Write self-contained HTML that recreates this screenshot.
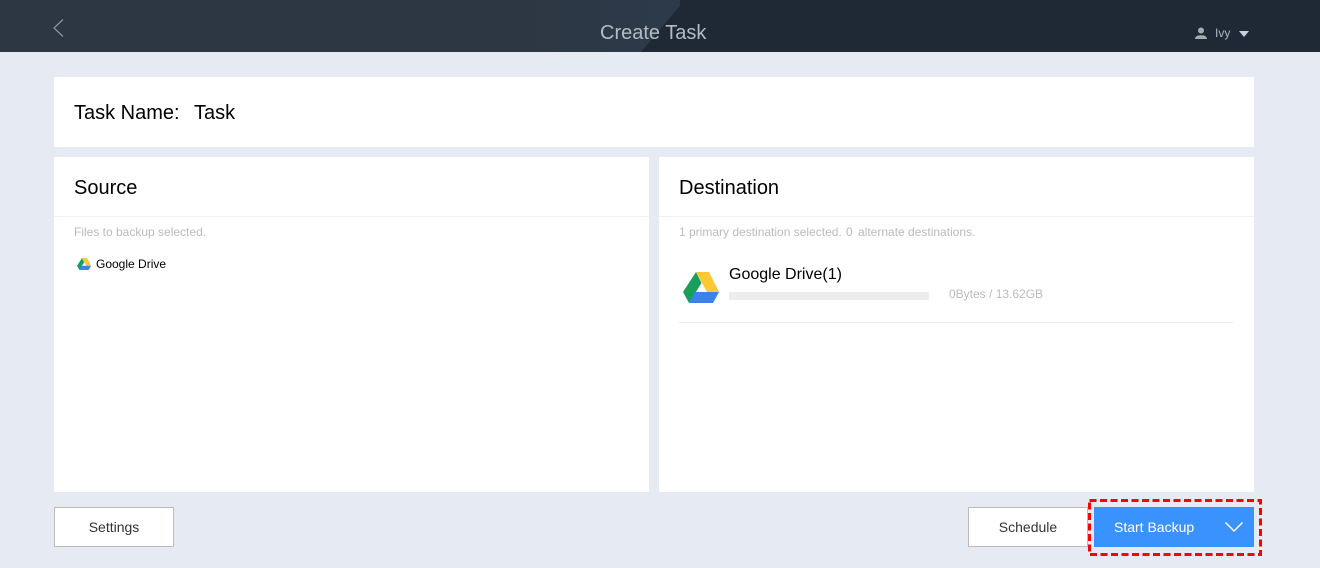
<!DOCTYPE html>
<html>
<head>
<meta charset="utf-8">
<style>
html,body{margin:0;padding:0}
body{width:1320px;height:568px;overflow:hidden;background:#e6eaf2;position:relative;font-family:"Liberation Sans",sans-serif}
.a{position:absolute;white-space:nowrap}
.w{position:absolute;background:#fff}
.btn{position:absolute;box-sizing:border-box;background:#fff;border:1px solid #bbb;color:#333;font-size:14px;text-align:center;line-height:38px}
.g{color:#bbb;font-size:12px}
</style>
</head>
<body>
<div class="a" style="left:0;top:0;width:1320px;height:52px;background:linear-gradient(to right,#2d3743 0,#2d3743 520px,#2d3a4b 680px,#1f2935 680px);overflow:hidden"></div>
<svg class="a" style="left:0;top:0" width="1320" height="52"><polygon points="685,0 1320,0 1320,52 641,52" fill="#1f2935"/></svg>
<svg class="a" style="left:50px;top:15px" width="20" height="26"><path d="M13 4.500 L4 13 L13 21.500" fill="none" stroke="#8a9197" stroke-width="1.300"/></svg>
<div class="a" style="left:600px;top:21px;font-size:20px;line-height:24px;color:#b4bcc3">Create Task</div>
<svg class="a" style="left:1194px;top:27px" width="14" height="13"><circle cx="7" cy="3.500" r="3" fill="#a4adaa"/><path d="M1 12 C1 9 4 8.200 7 8.200 C10 8.200 13 9 13 12 Z" fill="#a4adaa"/></svg>
<div class="a" style="left:1215px;top:26px;font-size:12px;line-height:14px;color:#aab6c4">Ivy</div>
<svg class="a" style="left:1239px;top:30px" width="11" height="8"><polygon points="0,1 10,1 5,7" fill="#c3d3e3"/></svg>

<div class="w" style="left:54px;top:77px;width:1200px;height:70px"></div>
<div class="a" style="left:74px;top:101px;font-size:20px;line-height:24px;color:#000">Task Name:</div>
<div class="a" style="left:194px;top:101px;font-size:20px;line-height:24px;color:#000">Task</div>

<div class="w" style="left:54px;top:157px;width:595px;height:335px"></div>
<div class="w" style="left:659px;top:157px;width:595px;height:335px"></div>
<div class="a" style="left:54px;top:216px;width:595px;height:1px;background:#eef1f6"></div>
<div class="a" style="left:659px;top:216px;width:595px;height:1px;background:#eef1f6"></div>

<div class="a" style="left:74px;top:176px;font-size:20px;line-height:24px;color:#000">Source</div>
<div class="a" style="left:679px;top:176px;font-size:20px;line-height:24px;color:#000">Destination</div>

<div class="a g" style="left:74px;top:225px;line-height:14px">Files to backup selected.</div>
<svg class="a" style="left:77px;top:258px" width="14" height="12" viewBox="683 272 36 31"><polygon points="683,292 696,272 701.500,283 689,303" fill="#1a9e5c"/><polygon points="696,272 709,272 719,292 707,292" fill="#fcc934"/><polygon points="695,292 719,292 713,303 689,303" fill="#3b82f0"/></svg>
<div class="a" style="left:96px;top:257px;font-size:12px;line-height:14px;color:#000">Google Drive</div>

<div class="a g" style="left:679px;top:225px;line-height:14px">1 primary destination selected.</div>
<div class="a g" style="left:846px;top:225px;line-height:14px">0</div>
<div class="a g" style="left:858px;top:225px;line-height:14px">alternate destinations.</div>

<svg class="a" style="left:683px;top:272px" width="36" height="31" viewBox="683 272 36 31"><polygon points="683,292 696,272 701.500,283 689,303" fill="#1a9e5c"/><polygon points="696,272 709,272 719,292 707,292" fill="#fcc934"/><polygon points="695,292 719,292 713,303 689,303" fill="#3b82f0"/></svg>
<div class="a" style="left:729px;top:265px;font-size:16px;line-height:19px;color:#000">Google Drive(1)</div>
<div class="a" style="left:729px;top:292px;width:200px;height:8px;background:#ececec"></div>
<div class="a g" style="left:949px;top:287px;line-height:14px">0Bytes / 13.62GB</div>
<div class="a" style="left:679px;top:322px;width:554px;height:1px;background:#e9edf3"></div>

<div class="btn" style="left:54px;top:507px;width:120px;height:40px">Settings</div>
<div class="btn" style="left:968px;top:507px;width:120px;height:40px">Schedule</div>
<div class="a" style="left:1094px;top:507px;width:160px;height:40px;background:#3a92ff"></div>
<div class="a" style="left:1114px;top:519px;font-size:14px;line-height:16px;color:#fff">Start Backup</div>
<svg class="a" style="left:1224px;top:519px" width="20" height="16"><path d="M1.500 3.500 L10 12 L18.500 3.500" fill="none" stroke="#fff" stroke-width="1.500"/></svg>
<svg class="a" style="left:1088px;top:499px" width="174" height="57"><rect x="1.500" y="1.500" width="171" height="54" fill="none" stroke="#f00" stroke-width="3" stroke-dasharray="7 3.500"/></svg>
</body>
</html>
